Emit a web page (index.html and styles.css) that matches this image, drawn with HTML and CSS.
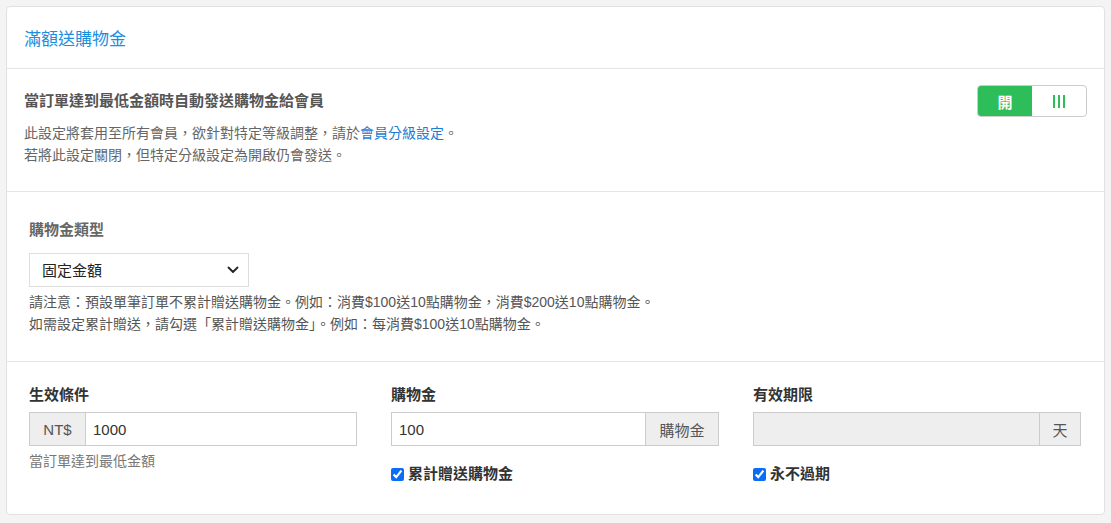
FILE: index.html
```html
<!DOCTYPE html>
<html lang="zh-Hant">
<head>
    <meta charset="UTF-8">
    <meta name="viewport" content="width=device-width, initial-scale=1.0">
    <title>滿額送購物金</title>
    <link rel="stylesheet" href="styles.css">
</head>
<body>
    <div class="panel">
        <div class="panel-heading">
            <h3>滿額送購物金</h3>
        </div>

        <!-- 開關 -->
        <div class="panel-section">
            <div class="switch-row">
                <h4>當訂單達到最低金額時自動發送購物金給會員</h4>
                <div class="switch">
                    <span class="switch-on">開</span>
                    <span class="switch-handle">
                        <svg width="12" height="13" viewBox="0 0 12 13">
                            <rect x="0" y="0" width="2" height="13" fill="#2dbe5a"/>
                            <rect x="5" y="0" width="2" height="13" fill="#2dbe5a"/>
                            <rect x="10" y="0" width="2" height="13" fill="#2dbe5a"/>
                        </svg>
                    </span>
                </div>
            </div>
            <p class="desc">此設定將套用至所有會員，欲針對特定等級調整，請於<a href="#">會員分級設定</a>。<br>若將此設定關閉，但特定分級設定為開啟仍會發送。</p>
        </div>

        <!-- 類型 -->
        <div class="panel-section type-section">
            <label class="type-label">購物金類型</label>
            <div class="select-wrap">
                <select class="form-select">
                    <option>固定金額</option>
                    <option>百分比</option>
                </select>
                <svg class="chevron" width="12" height="8" viewBox="0 0 12 8">
                    <path d="M1.5 1.5 L6 6 L10.5 1.5" fill="none" stroke="#222" stroke-width="1.8" stroke-linecap="round" stroke-linejoin="round"/>
                </svg>
            </div>
            <p class="note">請注意：預設單筆訂單不累計贈送購物金。例如：消費$100送10點購物金，消費$200送10點購物金。<br>如需設定累計贈送，請勾選「累計贈送購物金」。例如：每消費$100送10點購物金。</p>
        </div>

        <!-- 條件 -->
        <div class="panel-section fields">
            <div class="field">
                <label class="field-label">生效條件</label>
                <div class="input-group">
                    <span class="addon addon-left">NT$</span>
                    <input type="text" class="form-input" value="1000">
                </div>
                <p class="help">當訂單達到最低金額</p>
            </div>
            <div class="field">
                <label class="field-label">購物金</label>
                <div class="input-group">
                    <input type="text" class="form-input" value="100">
                    <span class="addon addon-right wide">購物金</span>
                </div>
                <label class="check"><input type="checkbox" checked> 累計贈送購物金</label>
            </div>
            <div class="field">
                <label class="field-label">有效期限</label>
                <div class="input-group">
                    <input type="text" class="form-input" disabled>
                    <span class="addon addon-right">天</span>
                </div>
                <label class="check"><input type="checkbox" checked> 永不過期</label>
            </div>
        </div>
    </div>
</body>
</html>
```

FILE: styles.css
```css
body {
    font-family: "Helvetica Neue", Helvetica, "Liberation Sans", "Noto Sans CJK TC", sans-serif;
    background-color: #f4f4f4;
    margin: 0;
    padding: 6px;
    color: #333;
}
.panel {
    background-color: #fff;
    border: 1px solid #e1e1e1;
    border-radius: 4px;
}
.panel-heading {
    height: 61px;
    padding: 0 17px;
    display: flex;
    align-items: center;
    border-bottom: 1px solid #e6e6e6;
}
.panel-heading h3 {
    margin: 0;
    font-size: 17px;
    font-weight: normal;
    color: #1a8fde;
}
.panel-section {
    border-bottom: 1px solid #e6e6e6;
}
.panel-section:last-child {
    border-bottom: none;
}

/* 開關 */
.panel-section:nth-child(2) {
    padding: 16px 17px 25px 17px;
}
.switch-row {
    display: flex;
    align-items: center;
    justify-content: space-between;
}
.switch-row h4 {
    margin: 0;
    font-size: 15px;
    line-height: 22px;
    color: #555;
}
.switch {
    display: flex;
    width: 108px;
    height: 30px;
    border: 1px solid #ccc;
    border-radius: 4px;
    overflow: hidden;
}
.switch-on {
    width: 54px;
    background-color: #2dbe5a;
    color: #fff;
    font-weight: bold;
    font-size: 15px;
    display: flex;
    align-items: center;
    justify-content: center;
}
.switch-handle {
    flex: 1;
    display: flex;
    align-items: center;
    justify-content: center;
}
.desc {
    margin: 5px 0 0 0;
    font-size: 14px;
    line-height: 22px;
    color: #666;
}
.desc a {
    color: #1a7fd4;
    text-decoration: none;
}

/* 類型 */
.type-section {
    padding: 27px 23px 26px 22px;
}
.type-label {
    display: block;
    font-size: 15px;
    line-height: 22px;
    font-weight: bold;
    color: #666;
}
.select-wrap {
    position: relative;
    width: 220px;
    margin-top: 12px;
}
.form-select {
    appearance: none;
    -webkit-appearance: none;
    width: 100%;
    height: 34px;
    border: 1px solid #ddd;
    border-radius: 0;
    background-color: #fff;
    padding: 0 12px;
    font-family: inherit;
    font-size: 15px;
    color: #222;
}
.chevron {
    position: absolute;
    right: 10px;
    top: 13px;
    pointer-events: none;
}
.note {
    margin: 4px 0 0 0;
    font-size: 14px;
    line-height: 22px;
    color: #555;
}

/* 條件 */
.fields {
    display: grid;
    grid-template-columns: repeat(3, 1fr);
    column-gap: 34px;
    padding: 22px 23px 29px 22px;
}
.field-label {
    display: block;
    font-size: 15px;
    line-height: 22px;
    font-weight: bold;
    color: #333;
    margin-bottom: 6px;
}
.input-group {
    display: flex;
    height: 34px;
}
.addon {
    display: flex;
    align-items: center;
    justify-content: center;
    background-color: #eee;
    border: 1px solid #ccc;
    color: #555;
    font-size: 15px;
    width: 40px;
}
.addon-left {
    width: 55px;
    border-right: none;
}
.addon-right {
    border-left: none;
}
.addon-right.wide {
    width: 72px;
}
.form-input {
    flex: 1;
    min-width: 0;
    border: 1px solid #ccc;
    padding: 0 7px;
    font-family: inherit;
    font-size: 15px;
    color: #333;
    outline: none;
}
.form-input:disabled {
    background-color: #eee;
}
.help {
    margin: 4px 0 0 0;
    font-size: 14px;
    line-height: 22px;
    color: #777;
}
.check {
    display: flex;
    align-items: center;
    margin-top: 17px;
    font-size: 15px;
    line-height: 22px;
    font-weight: bold;
    color: #333;
    gap: 4px;
}
.check input {
    margin: 0;
    width: 13px;
    height: 13px;
    accent-color: #0b6df5;
}
```
